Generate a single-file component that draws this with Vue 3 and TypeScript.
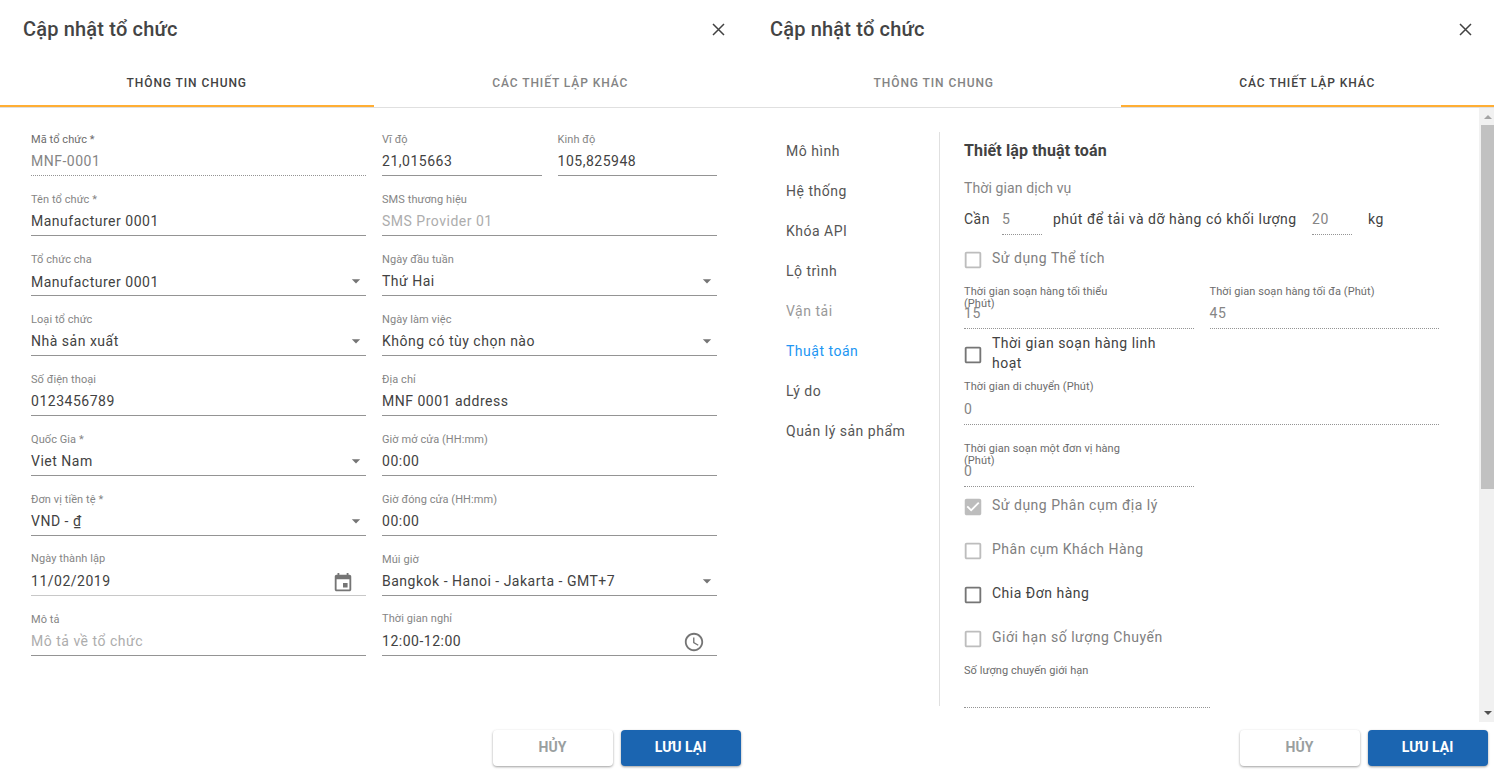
<script setup lang="ts">
type FieldIcon = 'arrow' | 'calendar' | 'clock'

interface Field {
  label: string
  value?: string
  placeholder?: string
  icon?: FieldIcon
  disabled?: boolean
  half?: boolean
  raised?: boolean
  lowered?: boolean
  light?: boolean
}

const tabs: string[] = ['THÔNG TIN CHUNG', 'CÁC THIẾT LẬP KHÁC']
const dialogs: number[] = [0, 1]

const leftFields: Field[] = [
  { label: 'Mã tổ chức *', value: 'MNF-0001', disabled: true },
  { label: 'Tên tổ chức *', value: 'Manufacturer 0001' },
  { label: 'Tổ chức cha', value: 'Manufacturer 0001', icon: 'arrow', lowered: true },
  { label: 'Loại tổ chức', value: 'Nhà sản xuất', icon: 'arrow' },
  { label: 'Số điện thoại', value: '0123456789' },
  { label: 'Quốc Gia *', value: 'Viet Nam', icon: 'arrow' },
  { label: 'Đơn vị tiền tệ *', value: 'VND - ₫', icon: 'arrow' },
  { label: 'Ngày thành lập', value: '11/02/2019', icon: 'calendar', raised: true, light: true },
  { label: 'Mô tả', placeholder: 'Mô tả về tổ chức' },
]

const rightFields: Field[] = [
  { label: 'Vĩ độ', value: '21,015663', half: true },
  { label: 'Kinh độ', value: '105,825948', half: true },
  { label: 'SMS thương hiệu', placeholder: 'SMS Provider 01' },
  { label: 'Ngày đầu tuần', value: 'Thứ Hai', icon: 'arrow' },
  { label: 'Ngày làm việc', value: 'Không có tùy chọn nào', icon: 'arrow' },
  { label: 'Địa chỉ', value: 'MNF 0001 address' },
  { label: 'Giờ mở cửa (HH:mm)', value: '00:00' },
  { label: 'Giờ đóng cửa (HH:mm)', value: '00:00' },
  { label: 'Múi giờ', value: 'Bangkok - Hanoi - Jakarta - GMT+7', icon: 'arrow' },
  { label: 'Thời gian nghỉ', value: '12:00-12:00', icon: 'clock', raised: true },
]

const columns: Field[][] = [leftFields, rightFields]

const menu: { text: string; state?: string }[] = [
  { text: 'Mô hình' },
  { text: 'Hệ thống' },
  { text: 'Khóa API' },
  { text: 'Lộ trình' },
  { text: 'Vận tải', state: 'muted' },
  { text: 'Thuật toán', state: 'current' },
  { text: 'Lý do' },
  { text: 'Quản lý sản phẩm' },
]

type Setting =
  | { kind: 'check'; cls: string; text: string; enabled?: boolean; checked?: boolean }
  | { kind: 'fields'; cls: string; items: { label: string; value: string }[] }

const settings: Setting[] = [
  { kind: 'check', cls: 'gap-13', text: 'Sử dụng Thể tích' },
  {
    kind: 'fields',
    cls: 'pair',
    items: [
      { label: 'Thời gian soạn hàng tối thiểu (Phút)', value: '15' },
      { label: 'Thời gian soạn hàng tối đa (Phút)', value: '45' },
    ],
  },
  { kind: 'check', cls: 'gap-4', text: 'Thời gian soạn hàng linh hoạt', enabled: true },
  { kind: 'fields', cls: 'full', items: [{ label: 'Thời gian di chuyển (Phút)', value: '0' }] },
  { kind: 'fields', cls: 'single', items: [{ label: 'Thời gian soạn một đơn vị hàng (Phút)', value: '0' }] },
  { kind: 'check', cls: 'gap-8', text: 'Sử dụng Phân cụm địa lý', checked: true },
  { kind: 'check', cls: 'gap-24', text: 'Phân cụm Khách Hàng' },
  { kind: 'check', cls: 'gap-24', text: 'Chia Đơn hàng', enabled: true },
  { kind: 'check', cls: 'gap-24', text: 'Giới hạn số lượng Chuyến' },
  { kind: 'fields', cls: 'limit', items: [{ label: 'Số lượng chuyến giới hạn', value: '' }] },
]

const iconPaths: Record<FieldIcon, string> = {
  arrow: 'M7 10l5 5 5-5z',
  calendar:
    'M17 12h-5v5h5v-5zM16 1v2H8V1H6v2H5c-1.11 0-1.99.9-1.99 2L3 19c0 1.1.89 2 2 2h14c1.1 0 2-.9 2-2V5c0-1.1-.9-2-2-2h-1V1h-2zm3 18H5V8h14v11z',
  clock:
    'M11.99 2C6.47 2 2 6.48 2 12s4.47 10 9.99 10C17.52 22 22 17.52 22 12S17.52 2 11.99 2zM12 20c-4.42 0-8-3.58-8-8s3.58-8 8-8 8 3.58 8 8-3.58 8-8 8zm.5-13H11v6l5.25 3.15.75-1.23-4.5-2.67z',
}
const boxEmpty =
  'M19 5v14H5V5h14m0-2H5c-1.1 0-2 .9-2 2v14c0 1.1.9 2 2 2h14c1.1 0 2-.9 2-2V5c0-1.1-.9-2-2-2z'
const boxChecked =
  'M19 3H5c-1.11 0-2 .9-2 2v14c0 1.1.89 2 2 2h14c1.11 0 2-.9 2-2V5c0-1.1-.89-2-2-2zm-9 14l-5-5 1.41-1.41L10 14.17l7.59-7.59L19 8l-9 9z'
</script>

<template>
  <div class="page">
    <section v-for="active in dialogs" :key="active" class="dialog">
      <header class="head">
        <h2>Cập nhật tổ chức</h2>
        <svg class="close" viewBox="0 0 20 20"><path d="M4 4l11 11M15 4l-11 11" /></svg>
      </header>
      <nav class="tabs">
        <div v-for="(tab, i) in tabs" :key="tab" class="tab" :class="{ active: i === active }">{{ tab }}</div>
      </nav>

      <main v-if="active === 0" class="form">
        <div v-for="(col, c) in columns" :key="c" class="column">
          <div
            v-for="f in col"
            :key="f.label"
            class="field"
            :class="{ half: f.half, disabled: f.disabled, raised: f.raised, lowered: f.lowered, light: f.light }"
          >
            <label>{{ f.label }}</label>
            <div class="value">
              <span v-if="f.value">{{ f.value }}</span>
              <span v-else class="placeholder">{{ f.placeholder }}</span>
              <svg v-if="f.icon" :class="f.icon" viewBox="0 0 24 24"><path :d="iconPaths[f.icon]" /></svg>
            </div>
          </div>
        </div>
      </main>

      <main v-else class="settings">
        <ul class="menu">
          <li v-for="m in menu" :key="m.text" :class="m.state">{{ m.text }}</li>
        </ul>
        <div class="panel">
          <h3>Thiết lập thuật toán</h3>
          <div class="subtitle">Thời gian dịch vụ</div>
          <div class="service">
            <span class="w-need">Cần</span>
            <span class="mini">5</span>
            <span class="w-text">phút để tải và dỡ hàng có khối lượng</span>
            <span class="mini">20</span>
            <span class="w-unit">kg</span>
          </div>
          <template v-for="s in settings" :key="s.kind + s.cls + (s.kind === 'check' ? s.text : '')">
            <div v-if="s.kind === 'check'" class="check" :class="[s.cls, { enabled: s.enabled }]">
              <svg viewBox="0 0 24 24"><path :d="s.checked ? boxChecked : boxEmpty" /></svg>
              <span>{{ s.text }}</span>
            </div>
            <div v-else class="inputs" :class="s.cls">
              <div v-for="item in s.items" :key="item.label" class="input">
                <label>{{ item.label }}</label>
                <div class="num">{{ item.value }}</div>
              </div>
            </div>
          </template>
        </div>
        <div class="scrollbar">
          <svg class="up" viewBox="0 0 8 4"><path d="M4 0l4 4H0z" /></svg>
          <div class="thumb"></div>
          <svg class="down" viewBox="0 0 8 4"><path d="M0 0h8L4 4z" /></svg>
        </div>
      </main>

      <footer class="foot">
        <button class="cancel">HỦY</button>
        <button class="save">LƯU LẠI</button>
      </footer>
    </section>
  </div>
</template>

<style>
body {
  margin: 0;
  background: #fff;
}
</style>

<style scoped>
* {
  box-sizing: border-box;
}
.page {
  display: flex;
  width: 1494px;
  height: 774px;
  overflow: hidden;
  font-family: Roboto, 'Noto Sans', sans-serif;
  font-size: 14px;
  line-height: 20px;
  letter-spacing: 0.51px;
  color: #424242;
}
.dialog {
  display: flex;
  flex-direction: column;
  width: 747px;
  height: 774px;
  background: #fff;
}
.head {
  display: flex;
  align-items: center;
  justify-content: space-between;
  height: 58px;
  padding: 0 18px 0 23px;
}
.head h2 {
  margin: 0;
  font-size: 20px;
  font-weight: 500;
  letter-spacing: 0.18px;
  line-height: 28px;
  color: #444;
}
.close {
  width: 20px;
  height: 20px;
  margin-top: 2px;
  fill: none;
  stroke: #424242;
  stroke-width: 1.5;
}
.tabs {
  display: flex;
  height: 50px;
  border-bottom: 1px solid #e0e0e0;
}
.tab {
  flex: 1;
  border-bottom: 2px solid transparent;
  text-align: center;
  font-size: 12px;
  font-weight: 500;
  line-height: 50px;
  height: 49px;
  letter-spacing: 0.92px;
  color: #848484;
}
.tab.active {
  border-color: #ffae34;
  color: #424242;
}
.form {
  display: flex;
  gap: 16px;
  flex: 1;
  padding: 8px 30px 0 31px;
}
.column {
  display: flex;
  flex-wrap: wrap;
  align-content: flex-start;
  column-gap: 16px;
  width: 335px;
}
.field {
  width: 100%;
  height: 60px;
  padding-top: 17px;
  border-bottom: 1px solid #949494;
}
.field.half {
  width: 159.5px;
}
.field label {
  display: block;
  margin-bottom: 4px;
  font-size: 11px;
  line-height: 14px;
  letter-spacing: 0.08px;
  color: #858585;
}
.value {
  display: flex;
  justify-content: space-between;
  height: 20px;
}
.field.disabled {
  border-bottom: 1px dotted #949494;
}
.field.disabled label {
  color: #6c6c6c;
}
.field.disabled .value {
  color: #858585;
}
.field.raised {
  padding-top: 16px;
}
.field.raised label {
  margin-bottom: 5px;
}
.field.lowered .value span {
  line-height: 22px;
}
.field.light {
  border-color: #c8c8c8;
}
.placeholder {
  color: #adadad;
}
.value svg {
  flex: none;
  fill: #757575;
}
.arrow {
  width: 20px;
  height: 20px;
  margin-right: 0.5px;
}
.calendar,
.clock {
  width: 22px;
  height: 22px;
  margin: 0.5px 12px 0 0;
}
.clock {
  margin-top: 0;
}
.settings {
  display: flex;
  height: 614px;
  overflow: hidden;
}
.menu {
  width: 193px;
  height: 574px;
  margin: 24px 0 0;
  padding: 0 0 0 39px;
  border-right: 1px solid #e0e0e0;
  list-style: none;
}
.menu li {
  height: 40px;
  line-height: 38px;
  white-space: nowrap;
  color: #555;
}
.menu .muted {
  color: #999;
}
.menu .current {
  color: #2196f3;
}
.panel {
  width: 475px;
  margin: 24px 40px 0 24px;
}
.panel h3 {
  margin: 0;
  font-size: 16px;
  font-weight: 700;
  line-height: 37px;
  letter-spacing: 0.14px;
}
.subtitle {
  margin-top: 9px;
  letter-spacing: 0.1px;
  color: #858585;
  letter-spacing: 0.12px;
}
.service {
  display: flex;
  height: 26px;
  margin-top: 11px;
  white-space: nowrap;
}
.w-need {
  width: 38px;
}
.w-text {
  width: 270px;
  padding-left: 11px;
}
.w-unit {
  padding-left: 16px;
}
.mini {
  width: 40px;
  border-bottom: 1px dotted #949494;
  color: #858585;
}
.check {
  display: flex;
  align-items: center;
  gap: 8.5px;
  color: #808080;
}
.check svg {
  flex: none;
  width: 22px;
  height: 22px;
  margin: 0 0 -3px -2.5px;
  fill: #bdbdbd;
}
.check span {
  width: 180px;
}
.check.enabled {
  color: #424242;
}
.check.enabled svg {
  fill: #757575;
}
.gap-13 {
  margin-top: 13px;
}
.gap-4 {
  margin-top: 4px;
}
.gap-8 {
  margin-top: 8px;
}
.gap-24 {
  margin-top: 24px;
}
.inputs {
  display: flex;
  gap: 16px;
}
.input {
  flex: 1;
  height: 44px;
  border-bottom: 1px dotted #949494;
  color: #858585;
}
.input label {
  display: block;
  width: 172px;
  height: 13px;
  padding-top: 1px;
  font-size: 11px;
  line-height: 12px;
  letter-spacing: 0.08px;
  color: #6c6c6c;
}
.num {
  margin-top: 5px;
}
.pair,
.single,
.limit {
  margin-top: 17px;
}
.full {
  margin-top: 7px;
}
.full .input,
.single .input {
  height: 45px;
}
.full .num,
.single .num {
  margin-top: 6px;
}
.single {
  width: 230px;
}
.limit {
  width: 246px;
}
.scrollbar {
  width: 15px;
  height: 614px;
  padding-left: 2px;
  background: #f1f1f1;
}
.scrollbar svg {
  display: block;
  width: 8px;
  height: 4px;
  margin-left: 3px;
}
.up {
  margin-top: 7px;
  fill: #a3a3a3;
}
.thumb {
  height: 364px;
  margin-top: 6px;
  background: #c1c1c1;
}
.down {
  margin-top: 222px;
  fill: #505050;
}
.foot {
  display: flex;
  justify-content: flex-end;
  gap: 8px;
  height: 52px;
  margin-top: auto;
  padding: 8px 6px 0 0;
}
.foot button {
  width: 120px;
  height: 36px;
  padding: 0 1px 2px 0;
  border: 0;
  border-radius: 4px;
  font: 700 14px/34px Roboto, 'Noto Sans', sans-serif;
  box-shadow: 0 1px 3px rgba(0, 0, 0, 0.2), 0 1px 2px rgba(0, 0, 0, 0.2);
}
.cancel {
  background: #fff;
  color: #9a9f9f;
}
.save {
  background: #1b65b1;
  color: #fff;
}
</style>
